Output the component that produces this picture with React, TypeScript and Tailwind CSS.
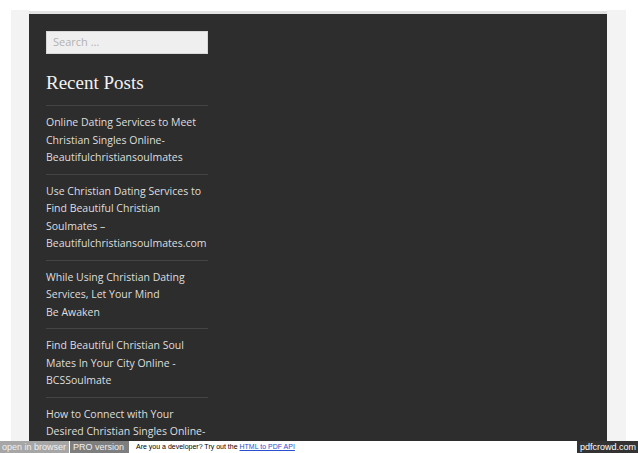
import React from "react";

const posts: string[][] = [
  ["Online Dating Services to Meet", "Christian Singles Online-", "Beautifulchristiansoulmates"],
  ["Use Christian Dating Services to", "Find Beautiful Christian", "Soulmates \u2013", "Beautifulchristiansoulmates.com"],
  ["While Using Christian Dating", "Services, Let Your Mind", "Be Awaken"],
  ["Find Beautiful Christian Soul", "Mates In Your City Online -", "BCSSoulmate"],
  ["How to Connect with Your", "Desired Christian Singles Online-"],
];

export default function App() {
  return (
    <div className="w-[638px] h-[453px] bg-white flex flex-col overflow-hidden">
      <div className="flex-1 min-h-0 flex pt-[10px] pl-[11px] pr-[12px] overflow-hidden">
        <div className="w-[18px] bg-[#f3f3f3]" />
        <div className="flex-1 mt-[1px] border-t-[3px] border-[#e2e2e2] bg-[#2d2d2d] overflow-hidden px-[17px] pt-[17px]">
          <div className="w-[162px]">
            <div
              className="h-[23px] bg-[#efefef] border border-[#d8d8d8] flex items-center pl-[6px] text-[11px] text-[#b2b2b2]"
              style={{ fontFamily: '"Open Sans", sans-serif' }}
            >
              Search …
            </div>
            <h2
              className="mt-[17px] text-[19px] leading-[24px] text-[#f2f2f2]"
              style={{ fontFamily: '"Liberation Serif", serif' }}
            >
              Recent Posts
            </h2>
            <ul className="mt-[10px]" style={{ fontFamily: '"Open Sans", sans-serif' }}>
              {posts.map((lines, i) => (
                <li key={i} className="border-t border-[#444444] pt-[8px] pb-[7px] text-[10.5px] leading-[17.5px] text-[#dedede]">
                  {lines.map((l, j) => (
                    <div key={j} className="whitespace-nowrap">{l}</div>
                  ))}
                </li>
              ))}
            </ul>
          </div>
        </div>
        <div className="w-[19px] bg-[#f3f3f3]" />
      </div>
      <div className="h-[12px] flex items-stretch text-[9px] leading-[12px]" style={{ fontFamily: '"Liberation Sans", Arial, sans-serif' }}>
        <div className="w-[69px] bg-[#a6a6a6] text-[#f0f0f0] pl-[2px] whitespace-nowrap overflow-hidden">open in browser</div>
        <div className="w-[59px] ml-[1px] bg-[#7e7e7e] text-[#f0f0f0] pl-[3px] whitespace-nowrap overflow-hidden">PRO version</div>
        <div className="ml-[7px] text-[7px] text-black whitespace-nowrap flex items-center">
          Are you a developer? Try out the&nbsp;<span className="text-[#2a4fd0] underline">HTML to PDF API</span>
        </div>
        <div className="flex-1" />
        <div className="w-[61px] bg-[#333333] text-white pl-[3px] whitespace-nowrap overflow-hidden">pdfcrowd.com</div>
      </div>
    </div>
  );
}
